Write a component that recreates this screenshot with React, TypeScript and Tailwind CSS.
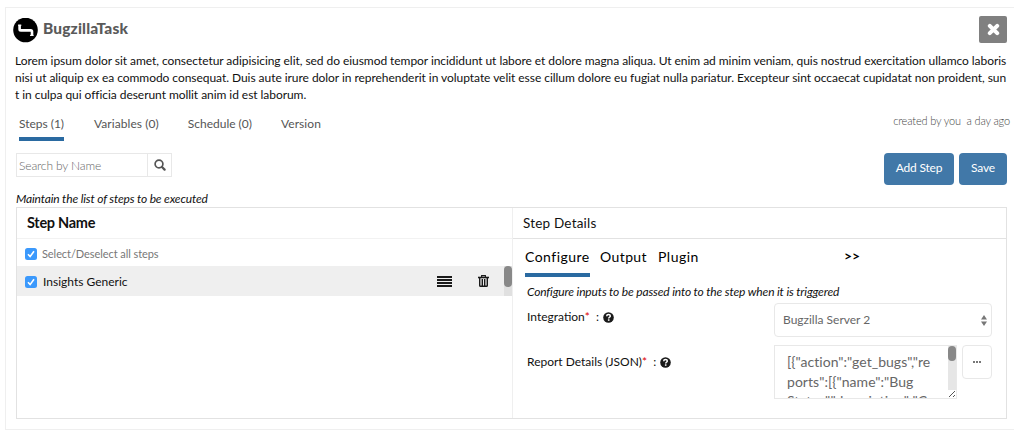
import type { ReactNode } from "react";

function BrandMark() {
  return (
    <svg className="size-[25px] shrink-0" viewBox="0 0 25 25">
      <circle cx="12.5" cy="12" r="12.3" fill="#000" />
      <path d="M6.6 6.8v4.4q0 1.2 1.2 1.2h10q1.2 0 1.2 1.2v4.2" fill="none" stroke="#fff" strokeWidth="2.6" />
      <path d="M5 7.2h3.4M17 17.4h3.6" stroke="#fff" strokeWidth="1" />
    </svg>
  );
}

function CloseIcon() {
  return (
    <svg className="size-[13px]" viewBox="0 0 13 13" stroke="#fff" strokeWidth="4" strokeLinecap="round">
      <path d="M2.8 2.8l7.4 7.4M10.2 2.8l-7.4 7.4" />
    </svg>
  );
}

function SearchIcon() {
  return (
    <svg className="size-3" viewBox="0 0 12 12" fill="none" stroke="#555">
      <circle cx="5" cy="5" r="3.9" strokeWidth="1.7" />
      <path d="M8 8l2.6 2.6" strokeWidth="2.2" strokeLinecap="round" />
    </svg>
  );
}

function BarsIcon() {
  return (
    <svg className="h-[11px] w-[15px]" viewBox="0 0 15 11" fill="#1a1a1a">
      <path d="M0 0h15v2H0zM0 3h15v2H0zM0 6h15v2H0zM0 9h15v2H0z" />
    </svg>
  );
}

function TrashIcon() {
  return (
    <svg className="h-3 w-[11px]" viewBox="0 0 11 12" fill="none" stroke="#1a1a1a">
      <path d="M3.6 2V.6h3.8V2" strokeWidth="1.1" />
      <path d="M0 2.5h11" strokeWidth="1.6" />
      <path d="M1.7 2.8v7.7q0 .8.9.8h5.8q.9 0 .9-.8V2.8M4.3 4v6.5M6.7 4v6.5" strokeWidth="1.4" />
    </svg>
  );
}

function HelpIcon() {
  return (
    <svg className="size-[11px]" viewBox="0 0 11 11">
      <circle cx="5.5" cy="5.5" r="5.3" fill="#1a1a1a" />
      <path d="M3.7 4.2c0-1 .8-1.6 1.8-1.6s1.8.6 1.8 1.5c0 1.2-1.6 1.1-1.6 2.3" fill="none" stroke="#fff" strokeWidth="1.5" />
      <path d="M4.9 7.3h1.6v1.5H4.9z" fill="#fff" />
    </svg>
  );
}

function Checkbox() {
  return (
    <svg className="size-3 shrink-0" viewBox="0 0 12 12">
      <rect width="12" height="12" rx="2.5" fill="#3b99fc" />
      <path d="M3 6.3l2.1 2.3 3.9-5.4" fill="none" stroke="#fff" strokeWidth="1.6" />
    </svg>
  );
}

function Field({ label, children }: { label: string; children: ReactNode }) {
  return (
    <div className="flex">
      <div className="flex w-[247px] items-center self-start leading-[28px]">
        <span>{label}</span>
        <span className="text-[#d00]">*</span>
        <span className="ml-[6px] mr-[4px]">:</span>
        <HelpIcon />
      </div>
      {children}
    </div>
  );
}

export default function App() {
  return (
    <div className="h-[430px] overflow-hidden bg-white pl-[5px] pt-[7px] font-[Lato,sans-serif] text-[12px] text-[#111]">
      <div className="flex h-[423px] w-[1020px] flex-col border border-[#efefef] pl-[7px]">
        <header className="flex h-[44px] w-[994px] items-start pt-[8px]">
          <div className="pt-[2px]">
            <BrandMark />
          </div>
          <h1 className="ml-[5px] mt-[2px] text-[15.5px] font-black leading-[20px] tracking-[0.15px] text-[#5a5a5a]">BugzillaTask</h1>
          <button className="ml-auto flex h-[27px] w-[28px] items-center justify-center rounded-[2px] bg-[#808080]">
            <CloseIcon />
          </button>
        </header>

        <p className="ml-[2px] whitespace-nowrap leading-[17px] tracking-[-0.054px]">
          Lorem ipsum dolor sit amet, consectetur adipisicing elit, sed do eiusmod tempor incididunt ut labore et dolore magna aliqua. Ut enim ad minim veniam, quis nostrud exercitation ullamco laboris
          <br />
          <span className="tracking-[-0.048px]">
            nisi ut aliquip ex ea commodo consequat. Duis aute irure dolor in reprehenderit in voluptate velit esse cillum dolore eu fugiat nulla pariatur. Excepteur sint occaecat cupidatat non proident, sun
          </span>
          <br />
          t in culpa qui officia deserunt mollit anim id est laborum.
        </p>

        <nav className="ml-[6px] flex h-[50px] w-[991px] whitespace-nowrap text-[#555]">
          <div className="mt-[12px] h-[26px] w-[45px] border-b-4 border-[#2a6aa1] leading-[17px] tracking-[-0.02px]">Steps (1)</div>
          <div className="ml-[30px] mt-[12px] leading-[17px] tracking-[0.06px]">Variables (0)</div>
          <div className="ml-[29px] mt-[12px] leading-[17px]">Schedule (0)</div>
          <div className="ml-[29px] mt-[12px] leading-[17px] tracking-[0.07px]">Version</div>
          <div className="ml-auto mt-[9px] whitespace-pre text-[11px] font-light leading-[17px] tracking-[-0.15px] text-[#444]">created by you  a day ago</div>
        </nav>

        <div className="ml-[3px] flex h-[37px] w-[991px]">
          <div className="flex h-[24px] w-[132px] items-center border border-[#e8e8e8] pl-[2px] pt-px font-light tracking-[-0.12px] text-[#666]">Search by Name</div>
          <div className="flex h-[24px] w-[24px] items-center justify-center border border-l-0 border-[#e8e8e8]">
            <SearchIcon />
          </div>
          <button className="ml-auto h-[32px] w-[70px] rounded-[4px] bg-[#4178a8] pb-[2px] tracking-[-0.19px] text-white">Add Step</button>
          <button className="ml-[5px] h-[32px] w-[48px] rounded-[4px] bg-[#4178a8] pb-[2px] tracking-[-0.15px] text-white">Save</button>
        </div>

        <p className="ml-[3px] h-[17px] italic leading-[17px] tracking-[-0.152px]">Maintain the list of steps to be executed</p>

        <main className="ml-[3px] flex h-[212px] w-[991px] border border-[#e2e2e2]">
          <section className="w-[496px] border-r border-[#efefef]">
            <h2 className="h-[31px] border-b border-[#f2f2f2] pl-[10px] text-[14.5px] font-bold leading-[30px] tracking-[-0.28px]">Step Name</h2>
            <div className="flex h-[27px] items-center gap-[5px] pl-[8px] pt-[3px] text-[11px] tracking-[-0.07px] text-[#777]">
              <Checkbox />
              Select/Deselect all steps
            </div>
            <div className="flex h-[30px] items-center bg-[#efefef] pl-[8px]">
              <div className="flex items-center pt-[2px]">
                <Checkbox />
                <span className="ml-[6px] w-[394px] leading-[16px]">Insights Generic</span>
              </div>
              <BarsIcon />
              <span className="ml-[26px]">
                <TrashIcon />
              </span>
              <div className="ml-auto h-full w-[8px] bg-[#e0e0e0]">
                <div className="h-[21px] rounded-[4px] bg-[#888]" />
              </div>
            </div>
          </section>

          <section className="flex-1">
            <h2 className="h-[31px] border-b border-[#e2e2e2] pl-[10px] text-[13.5px] leading-[30px] tracking-[0.2px]">Step Details</h2>
            <div className="ml-[12px] flex h-[45px] pt-[8px] text-[14px] leading-[19px] text-black">
              <div className="h-[30px] w-[65px] border-b-4 border-[#2a6aa1] tracking-[0.48px]">Configure</div>
              <div className="ml-[10px] w-[58px] tracking-[0.4px]">Output</div>
              <div className="w-[186px] tracking-[0.5px]">Plugin</div>
              <div className="font-bold leading-[17px]">&gt;&gt;</div>
            </div>
            <div className="ml-[14px] w-[466px]">
              <p className="h-[19px] italic leading-[16px] tracking-[-0.146px]">Configure inputs to be passed into to the step when it is triggered</p>
              <Field label="Integration">
                <div className="flex h-[34px] w-[218px] items-center justify-between rounded-[4px] border border-[#e8e8e8] pl-[8px] pr-[4px] text-[12px] text-[#666]">
                  Bugzilla Server 2
                  <svg className="h-[11px] w-[6px]" viewBox="0 0 6 11" fill="#777">
                    <path d="M3 0l3 4.5H0zM3 11l3-4.5H0z" />
                  </svg>
                </div>
              </Field>
              <div className="h-[8px]" />
              <div className="[&>div>div:first-child]:pt-[3px]">
                <Field label="Report Details (JSON)">
                  <div className="flex h-[54px] w-[183px] overflow-hidden border border-[#e8e8e8] text-[14px] text-[#666]">
                    <div className="w-[173px] whitespace-pre pl-[12px] pt-[6px] leading-[20px]">
                      <div className="tracking-[0.025px]">{'[{"action":"get_bugs","re'}</div>
                      <div className="tracking-[0.04px]">{'ports":[{"name":"Bug'}</div>
                      <div className="leading-[18px]">{'Status","description":"C'}</div>
                    </div>
                    <div className="flex w-[8px] flex-col justify-between bg-[#e6e6e6]">
                      <div className="h-[15px] rounded-[4px] bg-[#888]" />
                      <svg className="size-2 bg-white" viewBox="0 0 8 8" stroke="#555">
                        <path d="M1 7l6-6M5 7l2-2" />
                      </svg>
                    </div>
                  </div>
                  <button className="ml-[5px] flex h-[34px] w-[30px] items-center justify-center gap-px rounded-[4px] border border-[#e8e8e8]">
                    <i className="size-[2px] bg-[#777]" />
                    <i className="size-[2px] bg-[#777]" />
                    <i className="size-[2px] bg-[#777]" />
                  </button>
                </Field>
              </div>
            </div>
          </section>
        </main>
      </div>
    </div>
  );
}
